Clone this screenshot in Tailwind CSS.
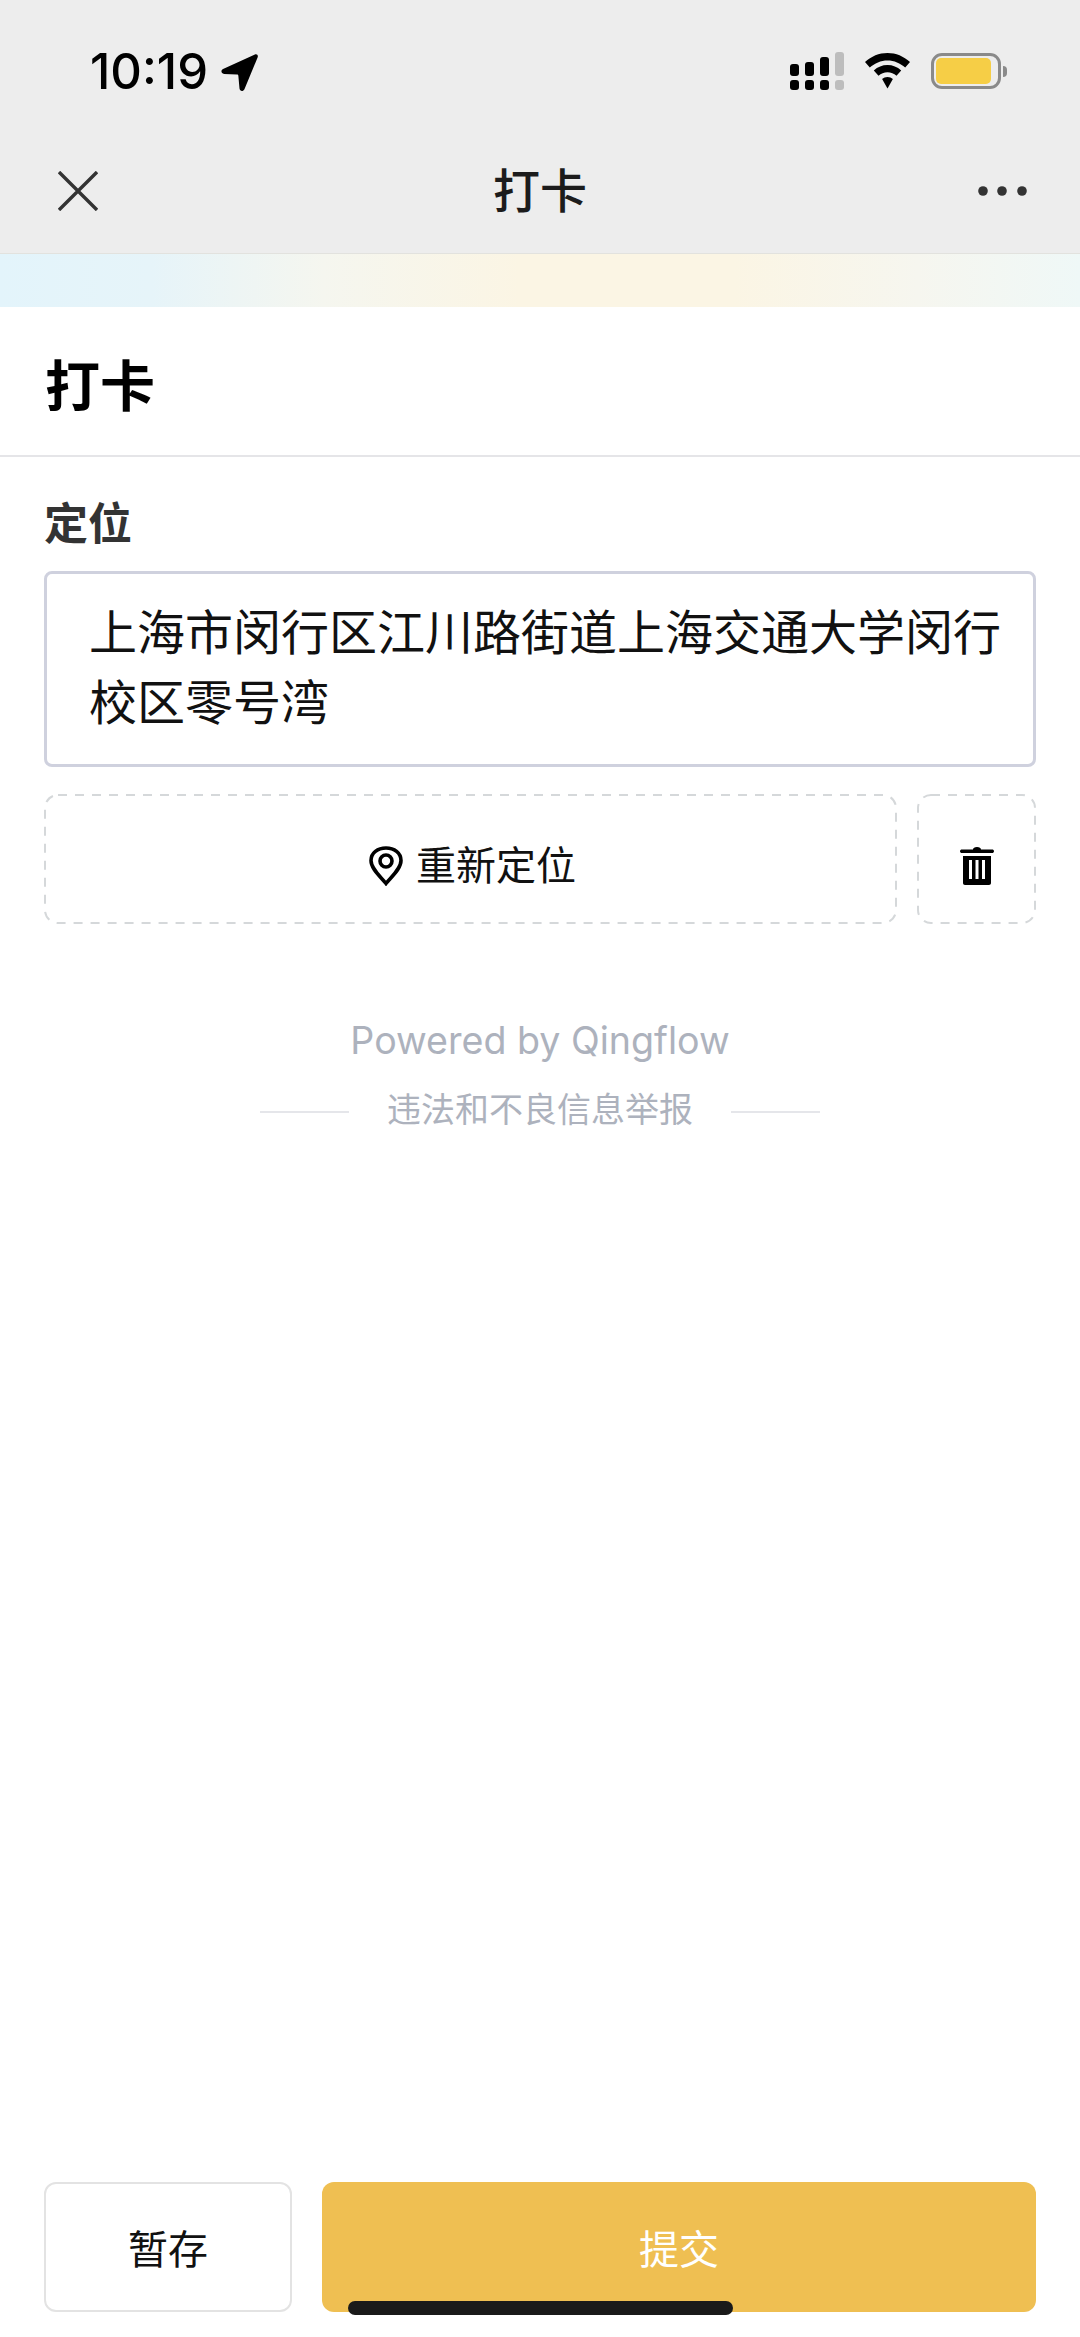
<!doctype html>
<html lang="zh">
  <head>
    <meta charset="UTF-8">
    <title>打卡</title>
    <script src="https://cdn.jsdelivr.net/npm/@tailwindcss/browser@4"></script>
  </head>
  <body class="bg-white font-['Inter','Noto_Sans_CJK_SC',sans-serif]">
    <div class="relative flex h-[2337px] w-[1080px] flex-col overflow-hidden">
      <!-- status bar -->
      <div class="flex h-[126px] items-start justify-between bg-[#ededed] pt-[46px] pl-[90px] pr-[73px]">
        <div class="flex items-center gap-[13px]">
          <span class="text-[49px] leading-[52px] font-medium text-black">10:19</span>
          <svg class="h-[37px] w-[37px]" viewBox="0 0 36 36" fill="#000">
            <path d="M33 0.4 L2 14.5 C-0.6 15.8 0.2 19.2 3 19.4 L15.5 20 C16.4 20 16.8 20.5 16.9 21.4 L18 33.6 C18.3 36.4 21.6 36.8 22.8 34.2 L35.6 3.4 C36.5 1.2 35 -0.4 33 0.4 Z"/>
          </svg>
        </div>
        <div class="flex items-center gap-[20px] pt-[6px]">
          <svg class="h-[38px] w-[54px]" viewBox="0 0 54 38">
            <g fill="#000">
              <rect x="0" y="28" width="9" height="10" rx="3"/><rect x="15" y="28" width="9" height="10" rx="3"/><rect x="30" y="28" width="9" height="10" rx="3"/>
              <rect x="0" y="12" width="9" height="12" rx="3"/><rect x="15" y="10" width="9" height="14" rx="3"/><rect x="30" y="5" width="9" height="19" rx="3"/>
            </g>
            <g fill="#bdbdbd">
              <rect x="45" y="28" width="9" height="10" rx="3"/><rect x="45" y="0" width="9" height="24" rx="3"/>
            </g>
          </svg>
          <svg class="h-[36px] w-[47px]" viewBox="0 0 46 36" fill="#000">
            <path d="M23 0 C14.5 0 6.8 3.3 0.5 9 L5.3 14.6 C10.2 10 16.3 7.4 23 7.4 C29.7 7.4 35.8 10 40.7 14.6 L45.5 9 C39.2 3.3 31.5 0 23 0 Z"/>
            <path d="M23 12 C17.8 12 13.2 14 9.3 17.4 L14 22.8 C16.5 20.6 19.6 19.3 23 19.3 C26.4 19.3 29.5 20.6 32 22.8 L36.7 17.4 C32.8 14 28.2 12 23 12 Z"/>
            <path d="M23 24 C20.9 24 19.1 24.7 17.6 26 L23 35.6 L28.4 26 C26.9 24.7 25.1 24 23 24 Z"/>
          </svg>
          <div class="flex items-center gap-[2px]">
            <div class="h-[36px] w-[70px] rounded-[11px] border-[3px] border-[#8a8a8a] p-[2px]">
              <div class="h-full w-[55px] rounded-[5px] bg-[#f6ce46]"></div>
            </div>
            <div class="h-[11px] w-[4px] rounded-r-full bg-[#8a8a8a]"></div>
          </div>
        </div>
      </div>

      <!-- nav bar -->
      <div class="grid h-[127px] grid-cols-[1fr_auto_1fr] items-center bg-[#ededed] pt-[3px] px-[53px]">
        <svg class="ml-[5px] h-[40px] w-[40px]" viewBox="0 0 40 40" fill="none" stroke="#333" stroke-width="3.4">
          <path d="M1 1 L39 39 M39 1 L1 39"/>
        </svg>
        <span class="text-[47px] leading-[60px] font-medium text-[#1c1c1c]">打卡</span>
        <svg class="h-[10px] w-[49px] justify-self-end" viewBox="0 0 49 10" fill="#333">
          <circle cx="5" cy="5" r="4.8"/><circle cx="24" cy="5" r="4.8"/><circle cx="44" cy="5" r="4.8"/>
        </svg>
      </div>

      <!-- banner -->
      <div class="h-[54px] border-t border-[#e2e2de] bg-[linear-gradient(90deg,#e3f4fb_0%,#e6f4f9_14%,#f5f6ef_30%,#fbf5e4_48%,#fbf5e4_68%,#f6f6ef_85%,#eff8f7_100%)]"></div>

      <!-- title -->
      <div class="flex h-[150px] items-center border-b-2 border-[#e5e5e8] pl-[45px] pt-[10px]">
        <h1 class="text-[55px] leading-[60px] font-bold text-black">打卡</h1>
      </div>

      <!-- location field -->
      <div class="px-[44px] pt-[42px]">
        <div class="text-[44px] leading-[50px] font-semibold text-[#333]">定位</div>
        <div class="mt-[22px] h-[196px] rounded-[8px] border-[3px] border-[#cfd1de] pt-[24px] pl-[42px] pr-[20px] text-[48px] leading-[70px] text-[#111]">
          上海市闵行区江川路街道上海交通大学闵行校区零号湾
        </div>
        <div class="mt-[27px] flex gap-[20px]">
          <div class="relative flex h-[130px] w-[853px] items-center justify-center gap-[13px] pt-[14px] pl-[4px] text-[40px] text-[#111]">
            <svg class="absolute inset-0" width="853" height="130" fill="none" stroke="#d5d8da" stroke-width="2" stroke-dasharray="9 8">
              <rect x="1" y="1" width="851" height="128" rx="13"/>
            </svg>
            <svg class="h-[40px] w-[34px]" viewBox="0 0 34 40" fill="none" stroke="#000" stroke-width="3.6">
              <path d="M17 37.5 C12 31 2 23 2 14.5 C2 6.8 8.8 2 17 2 C25.2 2 32 6.8 32 14.5 C32 23 22 31 17 37.5 Z"/>
              <circle cx="17" cy="15" r="6"/>
            </svg>
            <span>重新定位</span>
          </div>
          <div class="relative flex h-[130px] w-[119px] items-center justify-center pt-[14px]">
            <svg class="absolute inset-0" width="119" height="130" fill="none" stroke="#d5d8da" stroke-width="2" stroke-dasharray="9 8">
              <rect x="1" y="1" width="117" height="128" rx="13"/>
            </svg>
            <svg class="h-[38px] w-[34px]" viewBox="0 0 34 38" fill="#000">
              <path d="M13 2.5 C13 1 14.5 0 17 0 C19.5 0 21 1 21 2.5 L32 2.5 C33.2 2.5 34 3.2 34 4.2 C34 5.2 33.2 6 32 6 L2 6 C0.8 6 0 5.2 0 4.2 C0 3.2 0.8 2.5 2 2.5 Z"/>
              <path fill-rule="evenodd" d="M3 9 L31 9 L31 36 C31 37.2 30.2 38 29 38 L5 38 C3.8 38 3 37.2 3 36 Z M9 13 L9 32 L12 32 L12 13 Z M15.5 13 L15.5 32 L18.5 32 L18.5 13 Z M22 13 L22 32 L25 32 L25 13 Z"/>
            </svg>
          </div>
        </div>
      </div>

      <!-- footer note -->
      <div class="mt-[92px] flex flex-col items-center text-[#adb2bd]">
        <div class="text-[37.6px] leading-[50px] font-normal">Powered by Qingflow</div>
        <div class="mt-[19px] flex items-center gap-[38px]">
          <div class="mt-[4px] h-[2px] w-[89px] bg-[#e5e6ea]"></div>
          <span class="text-[34px] leading-[50px]">违法和不良信息举报</span>
          <div class="mt-[4px] h-[2px] w-[89px] bg-[#e5e6ea]"></div>
        </div>
      </div>

      <!-- bottom actions -->
      <div class="mt-auto flex gap-[30px] px-[44px] pb-[25px] text-[40px]">
        <div class="flex h-[130px] w-[248px] items-center justify-center rounded-[12px] border-2 border-[#e3e3e3] pt-[6px] text-[#111]">暂存</div>
        <div class="flex h-[130px] flex-1 items-center justify-center rounded-[12px] bg-[#efbf52] pt-[6px] text-white">提交</div>
      </div>

      <!-- home indicator -->
      <div class="absolute left-[348px] top-[2301px] h-[14px] w-[385px] rounded-full bg-[#1a1a1a]"></div>
    </div>
  </body>
</html>
